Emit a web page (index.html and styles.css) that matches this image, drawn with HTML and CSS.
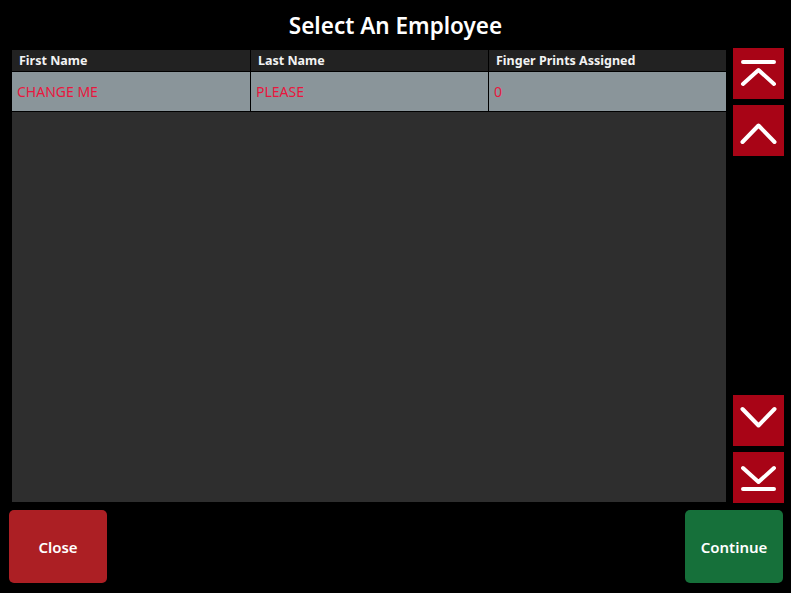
FILE: index.html
```html
<!DOCTYPE html>
<html lang="en">
<head>
    <meta charset="UTF-8">
    <meta name="viewport" content="width=device-width, initial-scale=1.0">
    <title>Select An Employee</title>
    <link rel="stylesheet" href="styles.css">
</head>
<body>
  <div class="screen">
    <div class="heading">
        <h1>Select An Employee</h1>
    </div>
    <div class="main">
        <div class="grid">
            <div class="row head">
                <div class="cell">First Name</div>
                <div class="cell">Last Name</div>
                <div class="cell">Finger Prints Assigned</div>
            </div>
            <div class="row item">
                <div class="cell">CHANGE ME</div>
                <div class="cell">PLEASE</div>
                <div class="cell">0</div>
            </div>
        </div>
        <div class="scroll">
            <div class="group">
                <button class="arrow" id="top">
                    <svg viewBox="0 0 51 51" width="51" height="51"><path d="M10 14 H41 M10 36 L25.5 22 L41 36" /></svg>
                </button>
                <button class="arrow" id="up">
                    <svg viewBox="0 0 51 51" width="51" height="51"><path d="M9.5 37 L25.5 20.5 L41.5 37" /></svg>
                </button>
            </div>
            <div class="group">
                <button class="arrow" id="down">
                    <svg viewBox="0 0 51 51" width="51" height="51"><path d="M9.5 14 L25.5 30.5 L41.5 14" /></svg>
                </button>
                <button class="arrow" id="bottom">
                    <svg viewBox="0 0 51 51" width="51" height="51"><path d="M10 16 L25.5 30 L41 16 M10 37 H41" /></svg>
                </button>
            </div>
        </div>
    </div>
    <div class="footer">
        <button class="btn close">Close</button>
        <button class="btn continue">Continue</button>
    </div>
  </div>
</body>
</html>
```

FILE: styles.css
```css
*{
    margin: 0;
    padding: 0;
    box-sizing: border-box;
}
body{
    background: black;
    font-family: "Noto Sans", "Open Sans", sans-serif;
    color: white;
}
.screen{
    width: 791px;
    height: 593px;
    display: flex;
    flex-direction: column;
}
.heading{
    height: 48px;
    display: flex;
    justify-content: center;
    align-items: center;
}
.heading h1{
    font-size: 22.5px;
    font-weight: 600;
    margin-top: 2px;
}
.main{
    display: flex;
    padding-left: 12px;
    gap: 7px;
    height: 455px;
}
.grid{
    width: 714px;
    height: 452px;
    margin-top: 2px;
    background: #2e2e2e;
}
.row{
    display: grid;
    grid-template-columns: 238px 238px 238px;
}
.head{
    background: #222222;
    height: 22px;
    border-bottom: 1px solid black;
}
.head .cell{
    font-size: 12.5px;
    font-weight: 700;
    padding-left: 7px;
    line-height: 21px;
    color: #f2f2f2;
}
.item{
    background: #8a959a;
    height: 40px;
    border-bottom: 1px solid black;
}
.item .cell{
    font-size: 14px;
    color: #e8173e;
    padding-left: 5px;
    line-height: 40px;
}
.cell + .cell{
    border-left: 1px solid black;
}
.scroll{
    width: 51px;
    display: flex;
    flex-direction: column;
    justify-content: space-between;
}
.group{
    display: flex;
    flex-direction: column;
    gap: 6px;
}
.arrow{
    width: 51px;
    height: 51px;
    background: #a80416;
    border: none;
    display: block;
}
.arrow svg{
    display: block;
}
.arrow path{
    fill: none;
    stroke: white;
    stroke-width: 4;
    stroke-linecap: round;
    stroke-linejoin: round;
}
.footer{
    display: flex;
    justify-content: space-between;
    padding: 7px 8px 0 9px;
}
.btn{
    width: 98px;
    height: 73px;
    border: none;
    border-radius: 5px;
    color: white;
    font-family: "Noto Sans", "Open Sans", sans-serif;
    font-size: 15px;
    font-weight: 600;
}
.close{
    background: #ac1f24;
}
.continue{
    background: #16703a;
}
```
